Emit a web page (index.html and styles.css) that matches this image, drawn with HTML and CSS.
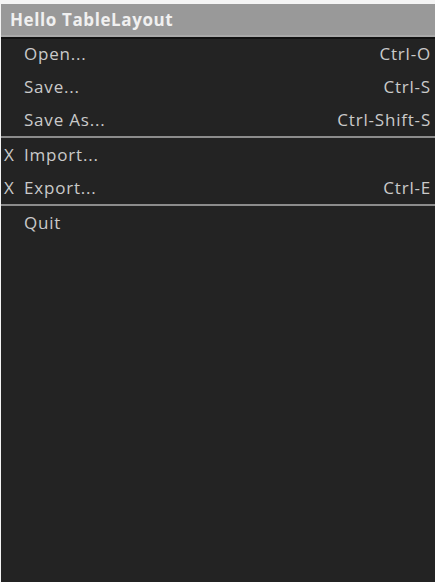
FILE: index.html
```html
<!DOCTYPE html>
<html>
<head>
<meta charset="utf-8">
<link rel="stylesheet" href="styles.css">
</head>
<body>
<div class="screen">
  <div class="titlebar">Hello TableLayout</div>
  <div class="table">
    <div class="row"><span class="mark"></span><span class="label">Open...</span><span class="key">Ctrl-O</span></div>
    <div class="row"><span class="mark"></span><span class="label">Save...</span><span class="key">Ctrl-S</span></div>
    <div class="row"><span class="mark"></span><span class="label">Save As...</span><span class="key">Ctrl-Shift-S</span></div>
    <div class="divider"></div>
    <div class="row"><span class="mark">X</span><span class="label">Import...</span><span class="key"></span></div>
    <div class="row"><span class="mark">X</span><span class="label">Export...</span><span class="key">Ctrl-E</span></div>
    <div class="divider"></div>
    <div class="row"><span class="mark"></span><span class="label">Quit</span><span class="key"></span></div>
  </div>
</div>
</body>
</html>
```
FILE: styles.css
```css
html, body {
  margin: 0;
  padding: 0;
  background: #f4f4f4;
}
body {
  padding-top: 4px;
  padding-left: 1px;
  height: 578px;
  overflow: hidden;
}
.screen {
  background: #232323;
  height: 578px;
  font-family: "Open Sans", "Noto Sans", sans-serif;
}
.titlebar {
  background: #999999;
  color: #f0f0f0;
  font-weight: 700;
  font-size: 17px;
  letter-spacing: 0.6px;
  height: 31px;
  line-height: 31px;
  padding-left: 9px;
  border-bottom: 2px solid #a8a8a8;
  box-shadow: 0 2px 0 #111111;
}
.table {
  color: #cacaca;
  font-size: 17px;
  font-weight: 500;
  letter-spacing: 0.8px;
}
.row {
  display: grid;
  grid-template-columns: 23px 1fr auto;
  height: 33px;
  align-items: center;
  padding-right: 4px;
}
.mark {
  padding-left: 3px;
}
.divider {
  height: 2px;
  background: #8c8c8c;
}
```
